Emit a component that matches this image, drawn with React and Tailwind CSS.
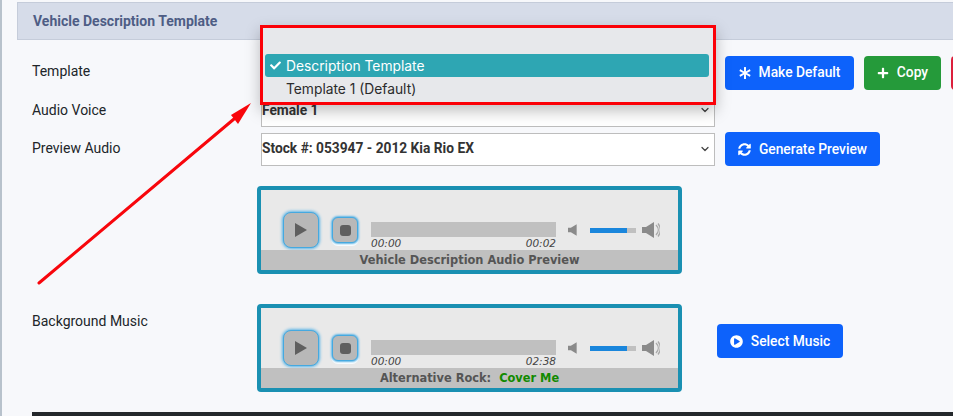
import React from 'react';
import { ChevronDown } from 'lucide-react';
import { FaAsterisk, FaPlus, FaSyncAlt, FaPlayCircle, FaCheck } from 'react-icons/fa';

const SpeakerIcon = ({ loud = false }) => (
  <svg width={loud ? 18 : 13} height="16" viewBox="0 0 18 16" className="shrink-0">
    <path d="M0 5h4l8-5v16l-8-5H0z" fill="#8a8a8a" />
    {loud && <path d="M14 3c3 3 3 7 0 10M16 1.500c3 4 3 9 0 13" fill="none" stroke="#a8a8a8" strokeWidth="1.300" />}
  </svg>
);

const Player = ({ duration, children }) => (
  <div className="w-[425px] h-[88px] border-4 border-[#1a90b2] rounded-[4px] bg-[#e9e9e9] flex flex-col shrink-0">
    <div className="h-[60px] flex items-start pl-[22px]">
      <div className="mt-[22px] w-[36px] h-[36px] rounded-[8px] bg-[#b8b8b8] border border-[#45a9e0] shadow-[0_0_3px_1px_#5ab4e6] flex items-center justify-center">
        <svg width="14" height="16" viewBox="0 0 14 16"><path d="M1 1l12 7-12 7z" fill="#5f5f5f" /></svg>
      </div>
      <div className="mt-[27px] ml-[13px] w-[26px] h-[26px] rounded-[6px] bg-[#b8b8b8] border border-[#45a9e0] shadow-[0_0_2px_1px_#5ab4e6,0_2px_0_1px_#ffffff] flex items-center justify-center">
        <div className="w-[11px] h-[11px] rounded-[3px] bg-[#5f5f5f]" />
      </div>
      <div className="mt-[32px] ml-[13px] w-[185px]">
        <div className="h-[15px] bg-[#c0c0c0]" />
        <div className="flex justify-between italic text-[10.5px] leading-[13px] text-[#444] font-['DejaVu_Sans',sans-serif]">
          <span>00:00</span>
          <span>{duration}</span>
        </div>
      </div>
      <div className="mt-[32px] ml-[12px] flex items-center">
        <SpeakerIcon />
        <div className="ml-[9px] w-[46px] h-[5px] bg-[#c0c0c0]">
          <div className="h-full w-[37px] bg-[#1a86dc]" />
        </div>
        <div className="ml-[6px] flex"><SpeakerIcon loud /></div>
      </div>
    </div>
    <div className="h-[20px] pt-[1px] bg-[#c0c0c0] flex items-center justify-center font-bold text-[11.4px] text-[#555] font-['DejaVu_Sans',sans-serif]">
      {children}
    </div>
  </div>
);

const Button = ({ icon, label, className }) => (
  <div className={`h-[34px] rounded-[4px] flex items-center justify-center gap-[8px] text-white text-[13.8px] font-medium shrink-0 ${className}`}>
    {icon}
    <span>{label}</span>
  </div>
);

const SelectBox = ({ label }) => (
  <div className="w-[454px] h-[33px] bg-white border border-[#bdbdbd] flex items-center justify-between pr-[3px] pb-[1px] shrink-0">
    <span className="font-bold text-[13.75px] text-[#333]">{label}</span>
    <ChevronDown size={12} strokeWidth={2.500} className="text-[#444]" />
  </div>
);

export default function App() {
  return (
    <div className="relative w-[953px] h-[416px] overflow-hidden bg-[#f7f8fb] border-l-2 border-[#b8c2cc] font-['Roboto',sans-serif]">
      {/* Panel header */}
      <div className="ml-[15px] mt-[2px] h-[38px] bg-[#d6dce9] border border-[#c5ccda] border-r-0 flex items-center pl-[15px] font-bold text-[14px] text-[#4e5d85]">
        Vehicle Description Template
      </div>

      <div className="pl-[30px]">
        <div className="flex items-center mt-[16px] h-[34px]">
          <div className="w-[229px] shrink-0 pb-[4px] text-[14px] text-[#212529]">Template</div>
          <div className="w-[464px] shrink-0" />
          <Button icon={<FaAsterisk size={12} />} label="Make Default" className="w-[129px] pb-[1px] bg-[#0d62fb]" />
          <Button icon={<FaPlus size={12} />} label="Copy" className="w-[77px] ml-[10px] pb-[1px] bg-[#259a3a]" />
          <div className="w-[20px] h-[34px] ml-[10px] rounded-[4px] bg-[#dc1f3c] shrink-0" />
        </div>

        <div className="flex items-center mt-[4px]">
          <div className="w-[229px] shrink-0 text-[14px] text-[#212529]">Audio Voice</div>
          <SelectBox label="Female 1" />
        </div>

        <div className="flex items-center mt-[5px]">
          <div className="w-[229px] shrink-0 pb-[2px] text-[14px] text-[#212529]">Preview Audio</div>
          <SelectBox label="Stock #: 053947 - 2012 Kia Rio EX" />
          <Button icon={<FaSyncAlt size={13} />} label="Generate Preview" className="w-[155px] ml-[10px] bg-[#0d62fb]" />
        </div>

        <div className="flex mt-[20px]">
          <div className="w-[225px] shrink-0" />
          <Player duration="00:02">Vehicle Description Audio Preview</Player>
        </div>

        <div className="flex mt-[30px]">
          <div className="w-[225px] shrink-0 pt-[7px] text-[14px] text-[#212529]">Background Music</div>
          <Player duration="02:38">
            <span>Alternative Rock:</span>
            <span className="ml-[8px] text-[#128a00]">Cover Me</span>
          </Player>
          <Button icon={<FaPlayCircle size={13} />} label="Select Music" className="w-[126px] ml-[35px] mt-[20px] bg-[#0d62fb]" />
        </div>

        <div className="mt-[20px] h-[8px] bg-[#24282c]" />
      </div>

      {/* Open dropdown menu over the form */}
      <div className="absolute left-[258px] top-[25px] w-[456px] h-[80px] bg-[#e7e8eb] border-[3px] border-[#fb0007] shadow-[0_6px_14px_rgba(0,0,0,0.25)] pt-[26px] pl-[2px] pr-[4px] text-[13.8px] text-[#2b2b2b] font-['Inter',sans-serif]">
        <div className="relative h-[23px] pt-[2px] rounded-[3px] bg-[#2ea6b3] text-white flex items-center pl-[21px]">
          <FaCheck size={11} className="absolute left-[5px] top-[6px]" />
          Description Template
        </div>
        <div className="h-[23px] pt-[2px] flex items-center pl-[21px]">Template 1 (Default)</div>
      </div>

      {/* Red annotation arrow */}
      <svg className="absolute left-0 top-0 pointer-events-none" width="953" height="416" viewBox="0 0 953 416">
        <path d="M37 283L232 119" stroke="#f8060c" strokeWidth="3" strokeLinecap="round" fill="none" />
        <path d="M249 103L229 115L236 124z" fill="#f8060c" />
      </svg>
    </div>
  );
}
